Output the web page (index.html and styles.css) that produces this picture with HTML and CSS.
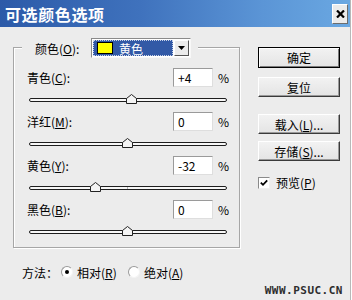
FILE: index.html
```html
<!DOCTYPE html>
<html lang="zh-CN">
<head>
<meta charset="utf-8">
<title>可选颜色选项</title>
<link rel="stylesheet" href="styles.css">
</head>
<body>
<div class="dialog">
  <div class="titlebar">
    <span class="title">可选颜色选项</span>
    <span class="close"><svg width="9" height="8" viewBox="0 0 9 8"><path d="M1 0.5 L8 7.5 M8 0.5 L1 7.5" stroke="#000" stroke-width="2.2"/></svg></span>
  </div>
  <div class="main">
    <div class="left">
      <div class="group">
        <div class="group-head">
          <span class="head-lbl">颜色(<u>O</u>):</span>
          <div class="select">
            <div class="select-value"><span class="swatch"></span><span>黄色</span></div>
            <div class="arrow"><svg width="7" height="4" viewBox="0 0 7 4"><path d="M0 0 H7 L3.5 4 Z" fill="#000"/></svg></div>
          </div>
        </div>
        <div class="channel">
          <div class="row"><span class="lbl">青色(<u>C</u>):</span><span class="input">+4</span><span class="pct">%</span></div>
          <div class="slider"><div class="track"></div><svg class="thumb" style="left:97px" width="11" height="10" viewBox="0 0 11 10"><path d="M0.5 9.5 V4.5 L5.5 0.5 L10.5 4.5 V9.5 Z" fill="#f4f4f4" stroke="#222"/></svg></div>
        </div>
        <div class="channel">
          <div class="row"><span class="lbl">洋红(<u>M</u>):</span><span class="input">0</span><span class="pct">%</span></div>
          <div class="slider"><div class="track"></div><svg class="thumb" style="left:93px" width="11" height="10" viewBox="0 0 11 10"><path d="M0.5 9.5 V4.5 L5.5 0.5 L10.5 4.5 V9.5 Z" fill="#f4f4f4" stroke="#222"/></svg></div>
        </div>
        <div class="channel">
          <div class="row"><span class="lbl">黄色(<u>Y</u>):</span><span class="input">-32</span><span class="pct">%</span></div>
          <div class="slider"><div class="track"></div><svg class="thumb" style="left:61px" width="11" height="10" viewBox="0 0 11 10"><path d="M0.5 9.5 V4.5 L5.5 0.5 L10.5 4.5 V9.5 Z" fill="#f4f4f4" stroke="#222"/></svg></div>
        </div>
        <div class="channel">
          <div class="row"><span class="lbl">黑色(<u>B</u>):</span><span class="input">0</span><span class="pct">%</span></div>
          <div class="slider"><div class="track"></div><svg class="thumb" style="left:93px" width="11" height="10" viewBox="0 0 11 10"><path d="M0.5 9.5 V4.5 L5.5 0.5 L10.5 4.5 V9.5 Z" fill="#f4f4f4" stroke="#222"/></svg></div>
        </div>
      </div>
      <div class="method">
        <span class="method-lbl">方法：</span>
        <span class="radio on"></span><span class="opt">相对(<u>R</u>)</span>
        <span class="radio"></span><span class="opt">绝对(<u>A</u>)</span>
      </div>
    </div>
    <div class="right">
      <div class="btn default">确定</div>
      <div class="btn gap-a">复位</div>
      <div class="btn gap-b">载入(<u>L</u>)...</div>
      <div class="btn gap-c">存储(<u>S</u>)...</div>
      <div class="check-row">
        <span class="checkbox"><svg width="8" height="8" viewBox="0 0 8 8"><path d="M0.8 3.6 L3 5.8 L7.2 1.4" fill="none" stroke="#000" stroke-width="1.8"/></svg></span>
        <span class="check-lbl">预览(<u>P</u>)</span>
      </div>
    </div>
  </div>
  <div class="watermark">WWW.PSUC.CN</div>
</div>
</body>
</html>
```

FILE: styles.css
```css
* { box-sizing: border-box; }

body {
  margin: 0;
  font-family: "Noto Sans CJK SC", "Liberation Sans", sans-serif;
  font-size: 12px;
  color: #000;
}

.dialog {
  width: 352px;
  height: 300px;
  background: #ececec;
  padding-right: 2px;
  box-shadow: inset -1px 0 0 #fff, inset -2px 0 0 #b8b8b8;
  overflow: hidden;
}

.titlebar {
  height: 27px;
  display: flex;
  align-items: center;
  padding-left: 5px;
  background: linear-gradient(to right, #2c5aa8 0%, #3f72bd 40%, #5b95d6 75%, #6aa8e2 100%);
}

.title {
  color: #fff;
  font-weight: bold;
  font-size: 16px;
  line-height: 18px;
  letter-spacing: 0.6px;
}

.close {
  margin-left: auto;
  margin-right: 2px;
  width: 16px;
  height: 20px;
  display: flex;
  align-items: center;
  justify-content: center;
  background: #ebebeb;
  border: 1px solid;
  border-color: #fff #6d6d6d #6d6d6d #fff;
}

.main {
  display: flex;
  padding-top: 20px;
}

.left { width: 240px; }

.group {
  margin-left: 13px;
  width: 227px;
  border: 1px solid #a6a6a6;
  box-shadow: inset 1px 1px 0 #fff, 1px 1px 0 #fff;
  padding-bottom: 3px;
}

.group-head {
  display: flex;
  align-items: center;
  width: fit-content;
  height: 20px;
  margin: -10px 0 0 8px;
  padding: 0 7px 0 13px;
  background: #ececec;
}

.head-lbl { width: 56px; }

.select {
  width: 100px;
  height: 20px;
  display: flex;
  align-items: stretch;
  padding: 1px;
  background: #fff;
  border: 1px solid;
  border-color: #8a8a8a #f8f8f8 #f8f8f8 #8a8a8a;
}

.select-value {
  flex: 1;
  display: flex;
  align-items: center;
  padding-left: 4px;
  margin-right: 1px;
  background: #3259a6;
  outline: 1px dotted #c8d2e8;
  outline-offset: -1px;
  color: #fff;
}

.swatch {
  width: 16px;
  height: 12px;
  background: #ffff00;
  border: 1px solid #000;
  margin-right: 6px;
}

.arrow {
  width: 15px;
  display: flex;
  align-items: center;
  justify-content: center;
  background: #ececec;
  border: 1px solid;
  border-color: #fff #555 #555 #fff;
}

.channel { margin-left: 13px; }

.group-head + .channel { margin-top: 10px; }

.row {
  display: flex;
  align-items: center;
  height: 19px;
}

.lbl { width: 146px; }

.input {
  width: 40px;
  height: 19px;
  line-height: 17px;
  padding-left: 4px;
  background: #fff;
  border: 1px solid;
  border-color: #9a9a9a #dedede #dedede #9a9a9a;
}

.pct { margin-left: 5px; }

.slider {
  position: relative;
  width: 198px;
  height: 25px;
  margin-left: 2px;
  padding-top: 11px;
}

.track {
  position: relative;
  height: 4px;
  background: #f7f7f7;
  border: 1px solid #1e1e1e;
  border-radius: 2px;
}

.track::after {
  content: "";
  position: absolute;
  left: 97px;
  top: 0;
  width: 1px;
  height: 2px;
  background: #b0b0b0;
}

.thumb {
  position: absolute;
  top: 7px;
}

.method {
  display: flex;
  align-items: center;
  height: 16px;
  margin-top: 16px;
  padding-left: 22px;
}

.method-lbl { width: 39px; }

.radio {
  position: relative;
  width: 12px;
  height: 12px;
  border-radius: 50%;
  background: #fff;
  border: 1px solid;
  border-color: #9a9a9a #f4f4f4 #f4f4f4 #9a9a9a;
}

.radio.on::after {
  content: "";
  position: absolute;
  left: 3px;
  top: 3px;
  width: 4px;
  height: 4px;
  border-radius: 50%;
  background: #000;
}

.opt { margin-left: 4px; width: 51px; }

.right {
  margin-left: 18px;
  width: 82px;
  display: flex;
  flex-direction: column;
}

.btn {
  height: 20px;
  display: flex;
  align-items: center;
  justify-content: center;
  background: linear-gradient(#f2f2f2, #e4e4e4);
  border: 1px solid;
  border-color: #fff #3a3a3a #3a3a3a #fff;
  box-shadow: inset -1px -1px 0 #9a9a9a;
}

.btn.default {
  height: 21px;
  border: 1px solid #000;
  box-shadow: inset 1px 1px 0 #fff, inset -1px -1px 0 #7a7a7a;
}

.gap-a { margin-top: 9px; }
.gap-b { margin-top: 17px; }
.gap-c { margin-top: 7px; }

.check-row {
  display: flex;
  align-items: center;
  height: 13px;
  margin-top: 15px;
}

.checkbox {
  width: 12px;
  height: 12px;
  display: flex;
  align-items: center;
  justify-content: center;
  background: #fff;
  border: 1px solid;
  border-color: #8a8a8a #f0f0f0 #f0f0f0 #8a8a8a;
}

.check-lbl { margin-left: 6px; }

.watermark {
  margin-top: 5px;
  padding-right: 7px;
  height: 12px;
  line-height: 12px;
  text-align: right;
  font-family: "DejaVu Sans Mono", monospace;
  font-weight: bold;
  font-size: 11px;
  letter-spacing: 0.5px;
  color: #2e2e2e;
}
```
